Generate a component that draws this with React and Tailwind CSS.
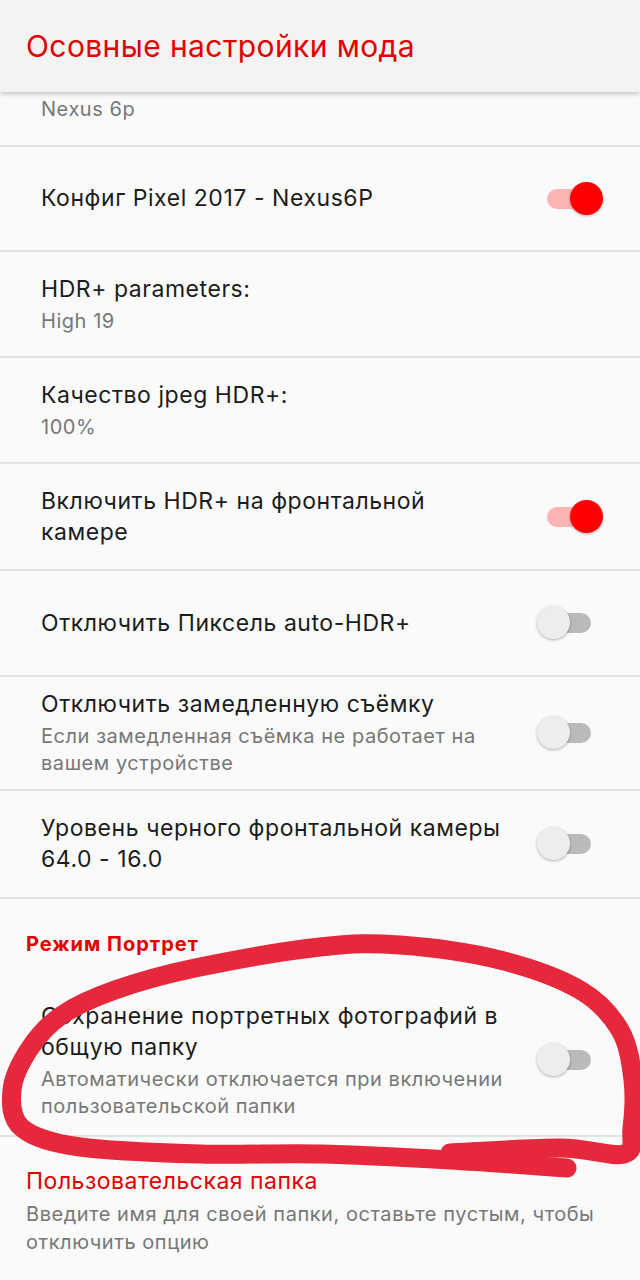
const scribble = [
  [450, 1153], [560, 1148], [624, 1154], [632, 1128], [633, 1080], [620, 1030],
  [580, 990], [500, 960], [400, 945], [320, 947], [195, 968], [115, 990],
  [62, 1015], [30, 1048], [12, 1090], [22, 1128], [80, 1147], [200, 1154],
  [320, 1154], [450, 1160], [567, 1168],
];

function smoothPath(pts) {
  let d = `M${pts[0][0]} ${pts[0][1]}`;
  for (let i = 0; i < pts.length - 1; i++) {
    const p0 = pts[i - 1] || pts[i];
    const p1 = pts[i];
    const p2 = pts[i + 1];
    const p3 = pts[i + 2] || p2;
    const c1x = p1[0] + (p2[0] - p0[0]) / 6;
    const c1y = p1[1] + (p2[1] - p0[1]) / 6;
    const c2x = p2[0] - (p3[0] - p1[0]) / 6;
    const c2y = p2[1] - (p3[1] - p1[1]) / 6;
    d += ` C${c1x} ${c1y} ${c2x} ${c2y} ${p2[0]} ${p2[1]}`;
  }
  return d;
}

function Toggle({ on }) {
  return (
    <div className="relative w-[66px] h-[34px] shrink-0">
      <div
        className={`absolute left-[10px] top-[7px] w-[44px] h-[20px] rounded-full ${
          on ? 'bg-[#ffb4b4]' : 'bg-[#bababa]'
        }`}
      />
      <div
        className={`absolute top-0 w-[33px] h-[33px] rounded-full shadow-[0_1px_3px_rgba(0,0,0,0.3)] ${
          on ? 'left-[33px] bg-[#ff0000]' : 'left-0 bg-[#ededed]'
        }`}
      />
    </div>
  );
}

function Row({ h, title, summary, on, toggle }) {
  return (
    <div
      className={`${h} flex items-center justify-between pl-[41px] pr-[37px] border-b-2 border-[#e3e3e3]`}
    >
      <div className="flex-1 pr-[20px]">
        <div className="text-[23px] leading-[31px] tracking-[0.55px] text-[#1c1c1c]">{title}</div>
        {summary && (
          <div className="text-[20px] leading-[27px] tracking-[0.55px] text-[#777777] mt-[3px]">
            {summary}
          </div>
        )}
      </div>
      {toggle && <Toggle on={on} />}
    </div>
  );
}

export default function App() {
  return (
    <div
      className="relative w-[640px] h-[1280px] overflow-hidden bg-[#fafafa]"
      style={{ fontFamily: 'Inter, Roboto, "Noto Sans", sans-serif' }}
    >
      <div className="relative z-10 h-[92px] bg-[#f3f3f3] shadow-[0_2px_5px_rgba(0,0,0,0.22)] flex items-center pl-[26px]">
        <h1 className="text-[30px] tracking-[0.4px] text-[#e10000]">Осовные настройки мода</h1>
      </div>

      <div className="h-[55px] pl-[41px] pt-[4px] border-b-2 border-[#e3e3e3]">
        <div className="text-[20px] leading-[27px] tracking-[0.55px] text-[#777777]">Nexus 6p</div>
      </div>

      <Row h="h-[105px]" title="Конфиг Pixel 2017 - Nexus6P" toggle on />
      <Row h="h-[106px]" title="HDR+ parameters:" summary="High 19" />
      <Row h="h-[106px]" title="Качество jpeg HDR+:" summary="100%" />
      <Row
        h="h-[107px]"
        title={
          <>
            Включить HDR+ на фронтальной
            <br />
            камере
          </>
        }
        toggle
        on
      />
      <Row h="h-[106px]" title="Отключить Пиксель auto-HDR+" toggle />
      <Row
        h="h-[114px]"
        title="Отключить замедленную съёмку"
        summary={
          <>
            Если замедленная съёмка не работает на
            <br />
            вашем устройстве
          </>
        }
        toggle
      />
      <Row
        h="h-[108px]"
        title={
          <>
            Уровень черного фронтальной камеры
            <br />
            64.0 - 16.0
          </>
        }
        toggle
      />

      <div className="h-[86px] pl-[26px] pt-[32px]">
        <div className="text-[20px] leading-[26px] tracking-[1px] font-bold text-[#e10000]">
          Режим Портрет
        </div>
      </div>

      <Row
        h="h-[152px]"
        title={
          <>
            Сохранение портретных фотографий в
            <br />
            общую папку
          </>
        }
        summary={
          <>
            Автоматически отключается при включении
            <br />
            пользовательской папки
          </>
        }
        toggle
      />

      <div className="pl-[26px] pt-[29px]">
        <div className="text-[23px] leading-[31px] tracking-[0.5px] text-[#e10000]">
          Пользовательская папка
        </div>
        <div className="text-[20px] leading-[28px] tracking-[0.55px] text-[#777777] mt-[3px]">
          Введите имя для своей папки, оставьте пустым, чтобы
          <br />
          отключить опцию
        </div>
      </div>

      <svg
        className="absolute left-0 top-0 z-20 pointer-events-none"
        width="640"
        height="1280"
        viewBox="0 0 640 1280"
        fill="none"
      >
        <path
          d={smoothPath(scribble)}
          stroke="#e5283b"
          strokeWidth="19"
          strokeLinecap="round"
          strokeLinejoin="round"
        />
      </svg>
    </div>
  );
}
